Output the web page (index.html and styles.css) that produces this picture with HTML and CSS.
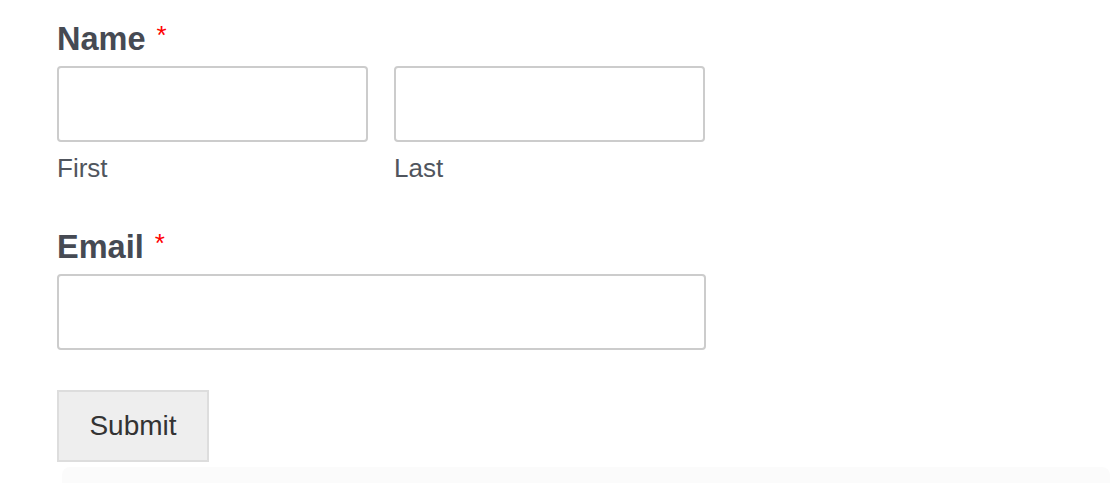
FILE: index.html
```html
<!DOCTYPE html>
<html lang="en">
  <head>
    <meta charset="UTF-8" />
    <meta name="viewport" content="width=device-width, initial-scale=1.0" />
    <title>Contact Form</title>
    <link rel="stylesheet" href="styles.css">
  </head>
  <body>
    <form class="contact-form">
      <div class="field">
        <label class="field-label">Name <span class="required">*</span></label>
        <div class="field-row">
          <div class="field-col">
            <input type="text" class="text-input" name="first" />
            <span class="sublabel">First</span>
          </div>
          <div class="field-col">
            <input type="text" class="text-input" name="last" />
            <span class="sublabel">Last</span>
          </div>
        </div>
      </div>

      <div class="field field-email">
        <label class="field-label">Email <span class="required">*</span></label>
        <input type="email" class="text-input wide" name="email" />
      </div>

      <div class="submit-row">
        <button type="button" class="submit-btn">Submit</button>
      </div>
    </form>
    <div class="shade"></div>
  </body>
</html>
```

FILE: styles.css
```css
body {
  margin: 0;
  background: #fff;
  font-family: "Liberation Sans", Arial, Helvetica, sans-serif;
  color: #464a53;
}

.contact-form {
  padding: 20px 0 0 57px;
  width: 649px;
}

.field-label {
  display: block;
  font-size: 32.5px;
  font-weight: bold;
  line-height: 38px;
  margin-bottom: 6px;
}

.required {
  color: #ff0000;
  font-weight: normal;
  font-size: 26px;
  position: relative;
  top: -6px;
  margin-left: 2px;
}

.field-row {
  display: flex;
  gap: 26px;
}

.field-col {
  display: flex;
  flex-direction: column;
  width: 311px;
}

.text-input {
  box-sizing: border-box;
  width: 100%;
  height: 76px;
  border: 2px solid #cccccc;
  border-radius: 4px;
  background: #fff;
  margin: 0;
  padding: 0 12px;
  font-size: 26px;
}

.sublabel {
  display: block;
  font-size: 26px;
  line-height: 30px;
  margin-top: 11px;
  color: #50555d;
}

.field-email {
  margin-top: 45px;
}

.submit-row {
  margin-top: 40px;
}

.submit-btn {
  box-sizing: border-box;
  width: 152px;
  height: 72px;
  background: #eeeeee;
  border: 2px solid #dddddd;
  border-radius: 0;
  font-family: "Liberation Sans", Arial, Helvetica, sans-serif;
  font-size: 28px;
  color: #333333;
  padding: 0;
  cursor: pointer;
}

.shade {
  margin: 5px 6px 0 62px;
  height: 20px;
  background: #fbfbfb;
  border-radius: 8px 8px 0 0;
}
```
